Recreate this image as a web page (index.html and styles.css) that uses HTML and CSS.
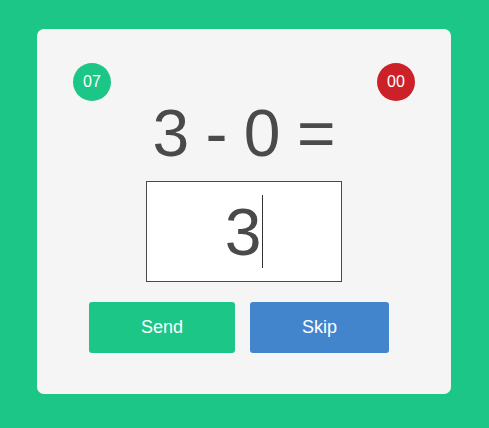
FILE: index.html
```html
<!DOCTYPE html>
<html>
<head>
<meta charset="utf-8">
<link rel="stylesheet" href="styles.css">
</head>
<body>
<div class="card">
  <span class="badge badge-left">07</span>
  <span class="badge badge-right">00</span>
  <div class="equation">3 - 0 =</div>
  <div class="answer"><span class="answer-text">3</span><span class="caret"></span></div>
  <div class="actions">
    <button class="btn btn-send">Send</button>
    <button class="btn btn-skip">Skip</button>
  </div>
</div>
</body>
</html>
```
FILE: styles.css
```css
html, body {
  margin: 0;
  padding: 0;
  background: #1bc686;
  font-family: "Liberation Sans", Arial, sans-serif;
}
body {
  padding: 29px 0 0 37px;
  height: 428px;
  box-sizing: border-box;
}
.card {
  position: relative;
  width: 414px;
  height: 365px;
  box-sizing: border-box;
  background: #f5f5f5;
  border-radius: 7px;
  padding-top: 67px;
  display: flex;
  flex-direction: column;
  align-items: center;
}
.badge {
  position: absolute;
  top: 34px;
  width: 38px;
  height: 38px;
  border-radius: 50%;
  color: #fff;
  font-size: 16px;
  line-height: 38px;
  text-align: center;
}
.badge-left { left: 36px; background: #1bc686; }
.badge-right { right: 36px; background: #cc2129; }
.equation {
  font-size: 66px;
  line-height: 74px;
  color: #4a4a4a;
  word-spacing: -2px;
}
.answer {
  margin-top: 11px;
  width: 196px;
  height: 101px;
  box-sizing: border-box;
  border: 1px solid #4a4a4a;
  background: #fff;
  display: flex;
  align-items: center;
  justify-content: center;
  color: #4a4a4a;
  font-size: 66px;
  line-height: 74px;
}
.caret {
  display: block;
  width: 1px;
  height: 73px;
  background: #333;
  margin-left: 1px;
}
.actions {
  margin-top: 20px;
  display: flex;
  gap: 15px;
  padding-right: 10px;
}
.btn {
  height: 51px;
  border: none;
  border-radius: 3px;
  color: #fff;
  font-family: "Liberation Sans", Arial, sans-serif;
  font-size: 18px;
  padding: 0 52px;
}
.btn-send { background: #1bc686; }
.btn-skip { background: #4285cd; }
```
